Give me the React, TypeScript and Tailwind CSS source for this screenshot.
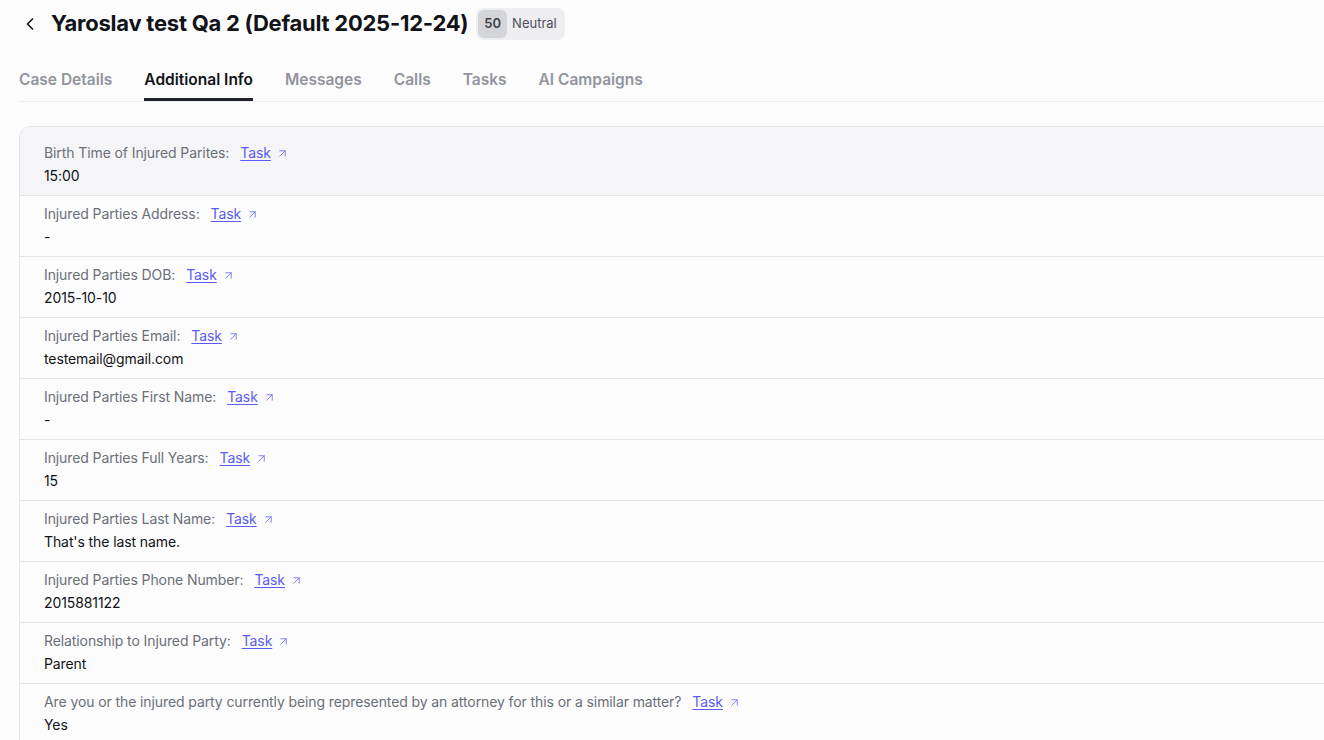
import { ChevronLeft, ArrowUpRight } from 'lucide-react';

const tabs = ['Case Details', 'Additional Info', 'Messages', 'Calls', 'Tasks', 'AI Campaigns'];

const fields = [
  { label: 'Birth Time of Injured Parites:', value: '15:00' },
  { label: 'Injured Parties Address:', value: '-' },
  { label: 'Injured Parties DOB:', value: '2015-10-10' },
  { label: 'Injured Parties Email:', value: 'testemail@gmail.com' },
  { label: 'Injured Parties First Name:', value: '-' },
  { label: 'Injured Parties Full Years:', value: '15' },
  { label: 'Injured Parties Last Name:', value: "That's the last name." },
  { label: 'Injured Parties Phone Number:', value: '2015881122' },
  { label: 'Relationship to Injured Party:', value: 'Parent' },
  {
    label: 'Are you or the injured party currently being represented by an attorney for this or a similar matter?',
    value: 'Yes',
  },
];

function FieldRow({ label, value, first }: { label: string; value: string; first?: boolean }) {
  return (
    <div
      className={`border-b border-[#e4e5e9] px-6 ${
        first ? 'bg-[#f5f5f7] pt-4 pb-[9px]' : 'h-[61px] pt-2 pb-[9px]'
      }`}
    >
      <div className="flex items-center text-[14px] leading-5 tracking-[-0.1px] text-[#6b6f78]">
        <span>{label}</span>
        <a href="#" className="ml-[11px] text-[#5b5bf5] underline underline-offset-2">
          Task
        </a>
        <ArrowUpRight className="ml-[5px] h-[13px] w-[13px] text-[#6f6ff5]" strokeWidth={1.6} />
      </div>
      <div className="mt-[3px] text-[14px] leading-5 tracking-[-0.1px] text-[#111318]">{value}</div>
    </div>
  );
}

export default function App() {
  return (
    <div
      className="min-h-screen overflow-hidden bg-[#fcfcfc]"
      style={{ fontFamily: 'Inter, "Noto Sans", sans-serif' }}
    >
      <div className="pl-[19px]">
        {/* Header */}
        <div className="flex h-[47px] items-center">
          <ChevronLeft className="ml-[1px] h-5 w-5 text-[#111318]" strokeWidth={2} />
          <h1 className="ml-[11px] text-[22px] font-bold tracking-[-0.25px] text-[#111318]">
            Yaroslav test Qa 2 (Default 2025-12-24)
          </h1>
          <div className="ml-[8px] flex h-8 items-center rounded-lg bg-[#eeeef0] p-[2px] pr-2">
            <span className="flex h-7 items-center rounded-md bg-[#d4d5d9] px-[6px] text-[13px] font-semibold text-[#3f4148]">
              50
            </span>
            <span className="ml-[5px] text-[13px] text-[#4b4e57]">Neutral</span>
          </div>
        </div>

        {/* Tabs */}
        <div className="mt-[21px] flex gap-8 border-b border-[#ececee]">
          {tabs.map((t) => {
            const active = t === 'Additional Info';
            return (
              <div
                key={t}
                className={`border-b-[3px] pb-[6px] text-[15.5px] leading-6 font-semibold ${
                  active ? 'border-[#1f2329] text-[#111318]' : 'border-transparent text-[#92949c]'
                }`}
              >
                {t}
              </div>
            );
          })}
        </div>

        {/* Card */}
        <div className="mt-[24px] -mr-6 overflow-hidden rounded-tl-xl border-t border-l border-[#e4e5e9]">
          {fields.map((f, i) => (
            <FieldRow key={i} label={f.label} value={f.value} first={i === 0} />
          ))}
        </div>
      </div>
    </div>
  );
}
